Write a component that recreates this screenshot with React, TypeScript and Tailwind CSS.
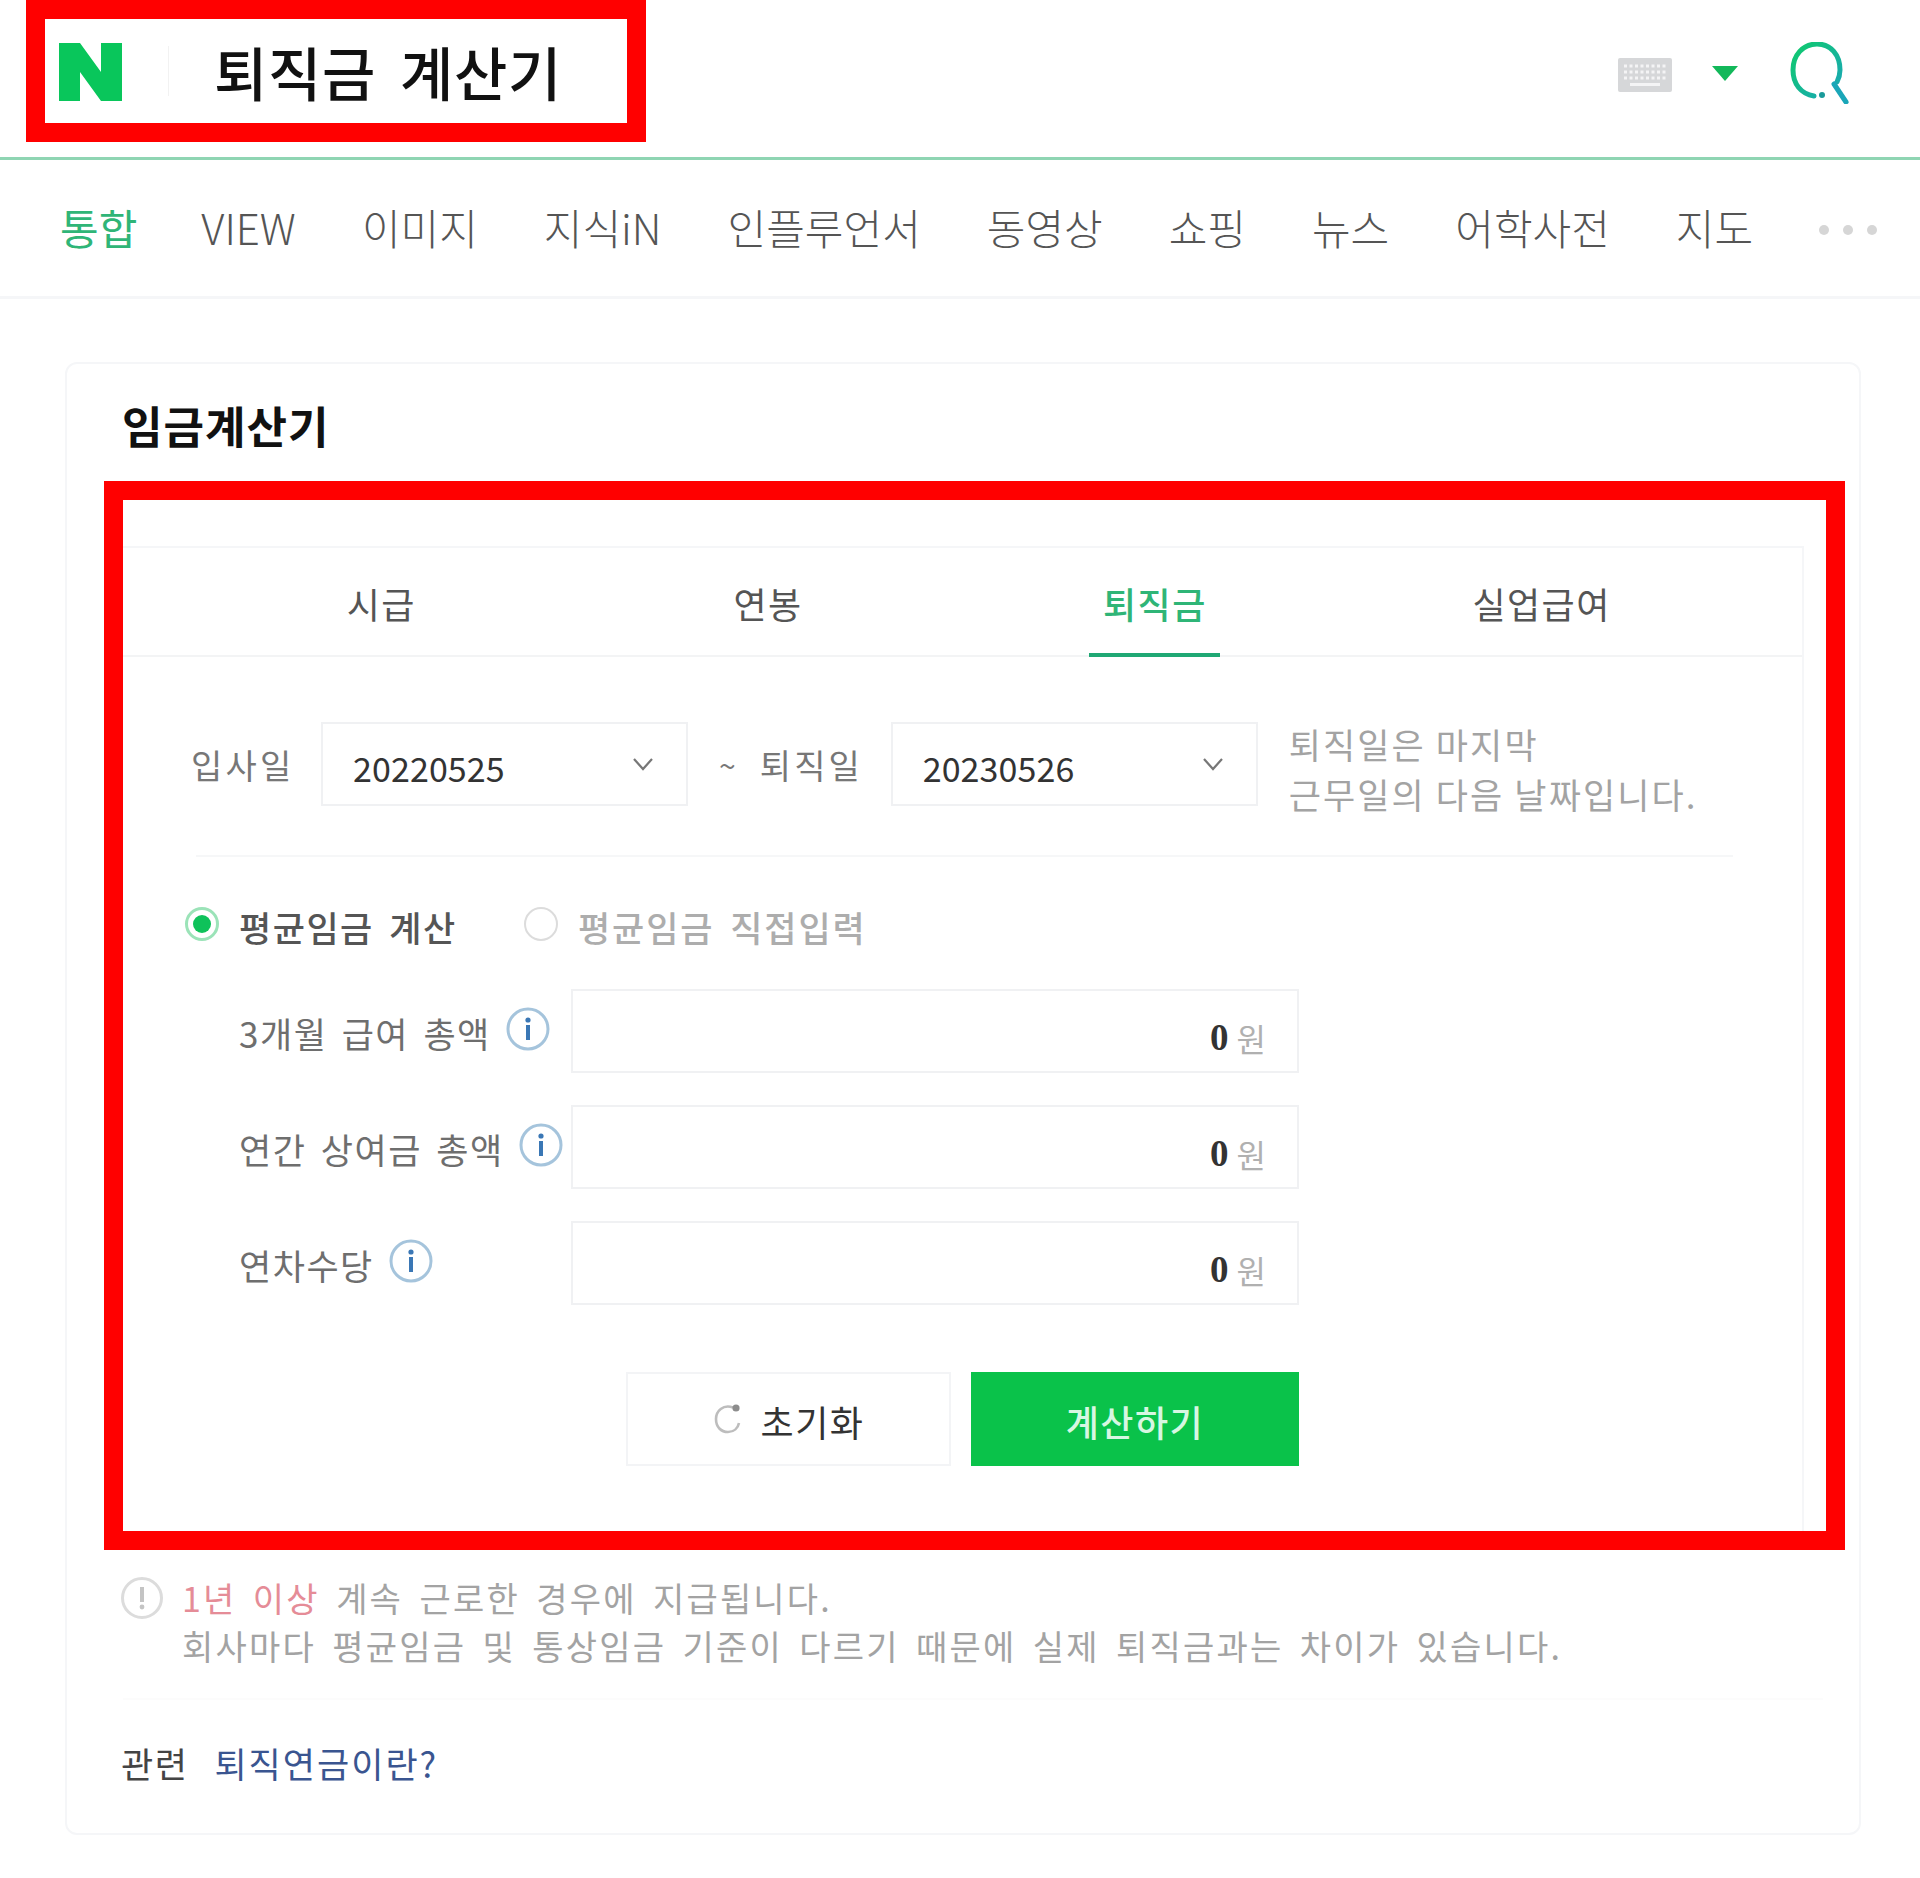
const navItems = ["VIEW", "이미지", "지식iN", "인플루언서", "동영상", "쇼핑", "뉴스", "어학사전", "지도"];
const tabs = ["시급", "연봉", "퇴직금", "실업급여"];

function NaverLogo() {
  return (
    <svg width="63" height="58" viewBox="0 0 63 58" className="shrink-0 mt-[2px]">
      <path d="M0 0H21L42 29V0H63V58H42L21 29V58H0Z" fill="#09c65b" />
    </svg>
  );
}

function KeyboardIcon() {
  return (
    <svg width="54" height="34" viewBox="0 0 54 34" className="mt-[4px]">
      <rect width="54" height="34" rx="2" fill="#d6d7d9" />
      <path d="M6 8H48M6 14H48M6 20H48" stroke="#f4f4f5" strokeWidth="3" strokeDasharray="3 2.5" />
      <rect x="12" y="25" width="30" height="3" fill="#f4f4f5" />
    </svg>
  );
}

function SearchIcon() {
  return (
    <svg width="62" height="62" viewBox="0 0 62 62" fill="none">
      <defs>
        <linearGradient id="q" x1="0" y1="0" x2="1" y2="1">
          <stop offset="0" stopColor="#0fca6c" />
          <stop offset="1" stopColor="#1aa6b8" />
        </linearGradient>
      </defs>
      <path d="M24 54C11 52 3 42 3 28C3 13 13 2 27 2C41 2 50 13 50 28C50 32 49 36 47 40" stroke="url(#q)" strokeWidth="5" strokeLinecap="round" />
      <path d="M44 42L56 60" stroke="#1aa6b8" strokeWidth="5" strokeLinecap="round" />
      <circle cx="32" cy="53" r="3" fill="#1a9a9a" />
    </svg>
  );
}

function Chevron() {
  return (
    <svg width="22" height="14" viewBox="0 0 22 14" fill="none">
      <path d="M2 2L11 12L20 2" stroke="#777" strokeWidth="2.2" />
    </svg>
  );
}

function InfoIcon() {
  return (
    <svg width="44" height="44" viewBox="0 0 44 44" fill="none" className="shrink-0">
      <circle cx="22" cy="22" r="20" stroke="#a5c4dc" strokeWidth="3" />
      <circle cx="22" cy="13" r="2.6" fill="#3a77b5" />
      <rect x="20" y="18" width="4" height="15" fill="#3a77b5" />
    </svg>
  );
}

function ResetIcon() {
  return (
    <svg width="30" height="32" viewBox="0 0 30 32" fill="none">
      <path d="M20 4.5C10 1 3 8 3 16C3 24 8 29 15 29C21 29 25 25 26 20" stroke="#bdbdbd" strokeWidth="2.6" />
      <circle cx="23" cy="5" r="3.6" fill="#8d8d8d" />
    </svg>
  );
}

function DateSelect({ value }: { value: string }) {
  return (
    <div className="w-[367px] h-[84px] border-2 border-[#f0f1f3] flex items-center justify-between pl-[30px] pr-[32px] shrink-0">
      <span className="text-[#333] text-[34px] tracking-[0.1px] mt-[6px]">{value}</span>
      <Chevron />
    </div>
  );
}

function AmountRow({ label }: { label: string }) {
  return (
    <div className="flex items-center h-[84px] mb-[32px]">
      <div className="w-[332px] flex items-center shrink-0">
        <span className="text-[#6e6e6e] text-[35px] tracking-[1.5px] [word-spacing:5px] whitespace-pre mt-[4px]">{label}</span>
        <span className="ml-[15px] -mt-[4px]">
          <InfoIcon />
        </span>
      </div>
      <div className="w-[728px] h-[84px] border-2 border-[#f0f1f3] flex items-center justify-end pr-[31px] pt-[13px]">
        <span className="text-[#333] text-[37px] font-bold font-['Liberation_Serif',serif]">0</span>
        <span className="text-[#b0b0b0] text-[32px] ml-[8px]">원</span>
      </div>
    </div>
  );
}

export default function App() {
  return (
    <div className="w-[1920px] h-[1878px] bg-white overflow-hidden font-['Noto_Sans_CJK_KR','Noto_Sans',sans-serif]">
      <header className="h-[160px] border-b-[3px] border-[#8fd5b3] flex items-start justify-between pl-[26px]">
        <div className="w-[620px] h-[142px] border-[19px] border-[#ff0000] flex items-center pl-[14px]">
          <NaverLogo />
          <div className="w-px h-[50px] bg-[#f2f2f2] ml-[46px]" />
          <h1 className="ml-[45px] text-[58px] font-medium text-[#111] tracking-[0.7px] [word-spacing:10px] whitespace-pre leading-none">퇴직금 계산기</h1>
        </div>
        <div className="flex items-center pt-[42px] pr-[68px]">
          <KeyboardIcon />
          <div className="w-0 h-0 ml-[40px] mr-[52px] border-x-[13px] border-x-transparent border-t-[15px] border-t-[#12b85a]" />
          <SearchIcon />
        </div>
      </header>

      <nav className="h-[139px] border-b-[3px] border-[#f5f6f8] flex items-center pl-[60px] pb-[4px] gap-[66px]">
        <span className="text-[#2fb577] text-[42px] -mr-[2px]">통합</span>
        {navItems.map((item) => (
          <span key={item} className="text-[#555] text-[42px] font-light whitespace-nowrap">{item}</span>
        ))}
        <div className="flex gap-[14px] mt-[8px]">
          <i className="block w-[10px] h-[10px] rounded-full bg-[#d6d6d6]" />
          <i className="block w-[10px] h-[10px] rounded-full bg-[#d6d6d6]" />
          <i className="block w-[10px] h-[10px] rounded-full bg-[#d6d6d6]" />
        </div>
      </nav>

      <main className="ml-[65px] mt-[63px] w-[1796px] h-[1473px] border-2 border-[#f5f6f8] rounded-xl pl-[37px] pr-[14px]">
        <h2 className="h-[117px] pl-[18px] pt-[32px] text-[44px] font-bold text-[#111] tracking-[1px] leading-[58px]">임금계산기</h2>

        <section className="w-[1741px] h-[1069px] border-[19px] border-[#ff0000] pt-[46px]">
          <div className="w-[1681px] h-[985px] border-t-2 border-r-2 border-[#f5f6f8]">
            <div className="h-[109px] border-b-2 border-[#f3f4f5] flex pl-[65px] pr-[67px]">
              {tabs.map((tab) => (
                <div key={tab} className="flex-1 flex justify-center">
                  <div className={tab === "퇴직금"
                    ? "w-[131px] h-[109px] pt-[4px] flex items-center justify-center border-b-[4px] border-[#1fa874] text-[#2fb577] font-medium text-[36px] tracking-[1.5px]"
                    : "h-[107px] pt-[2px] flex items-center justify-center text-[#555] text-[36px] tracking-[1.5px]"}>
                    <span>{tab}</span>
                  </div>
                </div>
              ))}
            </div>

            <div className="flex items-center h-[84px] pl-[68px] mt-[65px]">
              <span className="w-[130px] shrink-0 text-[#777] text-[34px] tracking-[3.2px]">입사일</span>
              <DateSelect value="20220525" />
              <span className="ml-[31px] text-[#777] text-[30px]">~</span>
              <span className="ml-[24px] w-[131px] shrink-0 text-[#777] text-[34px] tracking-[3.2px]">퇴직일</span>
              <DateSelect value="20230526" />
              <p className="ml-[31px] mt-[10px] text-[#a3a3a3] text-[35px] leading-[50px] tracking-[2.1px] whitespace-nowrap">퇴직일은 마지막<br />근무일의 다음 날짜입니다.</p>
            </div>

            <div className="ml-[73px] w-[1537px] h-[2px] bg-[#f6f7f8] mt-[49px]" />

            <div className="flex items-center pl-[62px] mt-[50px] h-[34px]">
              <span className="w-[34px] h-[34px] rounded-full border-[3px] border-[#9be3b8] flex items-center justify-center shrink-0">
                <i className="block w-[18px] h-[18px] rounded-full bg-[#0ec25a]" />
              </span>
              <span className="ml-[20px] w-[285px] shrink-0 text-[#555] text-[35px] font-medium tracking-[1.5px] [word-spacing:6px] whitespace-pre mt-[6px]">평균임금 계산</span>
              <span className="w-[34px] h-[34px] rounded-full border-2 border-[#dcdcdc] shrink-0" />
              <span className="ml-[20px] text-[#adadad] text-[35px] font-medium tracking-[1.9px] [word-spacing:6px] whitespace-pre mt-[6px]">평균임금 직접입력</span>
            </div>

            <div className="pl-[116px] mt-[48px]">
              <AmountRow label="3개월 급여 총액" />
              <AmountRow label="연간 상여금 총액" />
              <AmountRow label="연차수당" />
            </div>

            <div className="flex pl-[503px] pt-[35px] gap-[20px]">
              <button className="w-[325px] h-[94px] border-2 border-[#f3f4f6] flex items-center justify-center gap-[18px] text-[#333] text-[36px]">
                <ResetIcon />
                <span className="tracking-[1.5px] mt-[4px]">초기화</span>
              </button>
              <button className="w-[328px] h-[94px] pt-[4px] bg-[#0ac24a] flex items-center justify-center text-[#d7f7e2] text-[36px] font-medium tracking-[1.5px]">
                계산하기
              </button>
            </div>
          </div>
        </section>

        <div className="flex pl-[17px] pt-[26px]">
          <svg width="42" height="44" viewBox="0 0 42 44" fill="none" className="shrink-0">
            <circle cx="21" cy="22" r="19.5" stroke="#dcdcdc" strokeWidth="3" />
            <rect x="19" y="11" width="4" height="15" fill="#c4c4c4" />
            <circle cx="21" cy="31" r="2.4" fill="#c4c4c4" />
          </svg>
          <p className="ml-[19px] -mt-[2px] text-[#a3a3a3] text-[34px] leading-[48px] tracking-[2.2px] [word-spacing:6.5px] whitespace-pre">
            <span className="text-[#e58c97]">1년 이상</span> 계속 근로한 경우에 지급됩니다.{"\n"}회사마다 평균임금 및 통상임금 기준이 다르기 때문에 실제 퇴직금과는 차이가 있습니다.
          </p>
        </div>

        <div className="ml-[19px] w-[1700px] h-[2px] bg-[#fcfcfc] mt-[28px]" />

        <div className="flex items-center pl-[17px] pt-[37px] text-[35px]">
          <span className="text-[#444] tracking-[1.5px]">관련</span>
          <span className="ml-[26px] text-[#3a5590] tracking-[2px]">퇴직연금이란?</span>
        </div>
      </main>
    </div>
  );
}
